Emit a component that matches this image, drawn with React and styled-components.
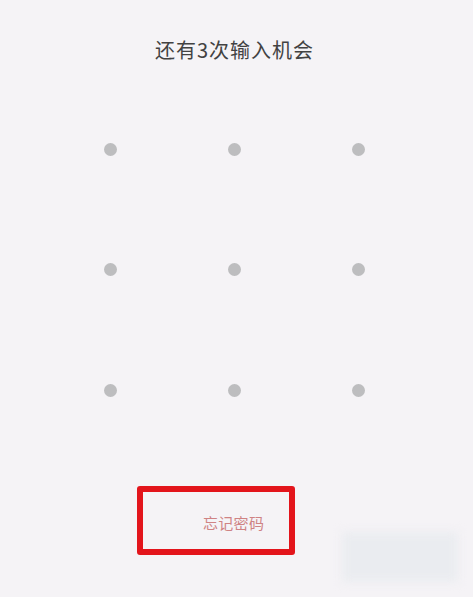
import React from 'react';
import styled, { createGlobalStyle } from 'styled-components';

const GlobalStyle = createGlobalStyle`
  html, body {
    margin: 0;
    padding: 0;
    background: #f5f3f6;
  }
  body {
    font-family: "Noto Sans CJK SC", "Noto Sans", sans-serif;
  }
`;

const dots = Array.from({ length: 9 }, (_, i) => i);

const App = () => (
    <>
        <GlobalStyle />
        <Page>
            <Title>还有3次输入机会</Title>
            <DotGrid>
                {dots.map(i => (
                    <Cell key={i}>
                        <Dot />
                    </Cell>
                ))}
            </DotGrid>
            <Footer>
                <ForgotBox>
                    <ForgotText>忘记密码</ForgotText>
                </ForgotBox>
            </Footer>
            <Smudge />
        </Page>
    </>
);

export default App;

const Page = styled.div`
    position: relative;
    width: 473px;
    height: 597px;
    overflow: hidden;
    display: flex;
    flex-direction: column;
    background: #f5f3f6;
`

const Title = styled.div`
    padding-top: 36px;
    text-align: center;
    font-size: 20px;
    line-height: 28px;
    color: #424242;
    letter-spacing: 1px;
    padding-right: 4px;
`

const DotGrid = styled.div`
    margin-top: 25px;
    margin-left: 48px;
    display: grid;
    grid-template-columns: repeat(3, 124px);
    grid-template-rows: repeat(3, 120.5px);
`

const Cell = styled.div`
    display: flex;
    align-items: center;
    justify-content: center;
`

const Dot = styled.div`
    width: 13px;
    height: 13px;
    border-radius: 50%;
    background: #bdbdbf;
`

const Footer = styled.div`
    margin-top: 35px;
    padding-left: 137px;
    display: flex;
`

const ForgotBox = styled.div`
    box-sizing: border-box;
    width: 158px;
    height: 69px;
    border: 6px solid #e3141b;
    border-radius: 3px;
    display: flex;
    align-items: center;
    padding-left: 60px;
`

const ForgotText = styled.span`
    font-size: 15px;
    line-height: 20px;
    letter-spacing: 0.3px;
    color: #cf8384;
    margin-top: 6px;
`

const Smudge = styled.div`
    position: absolute;
    left: 342px;
    top: 532px;
    width: 116px;
    height: 50px;
    background: #eaecf0;
    filter: blur(5px);
`
